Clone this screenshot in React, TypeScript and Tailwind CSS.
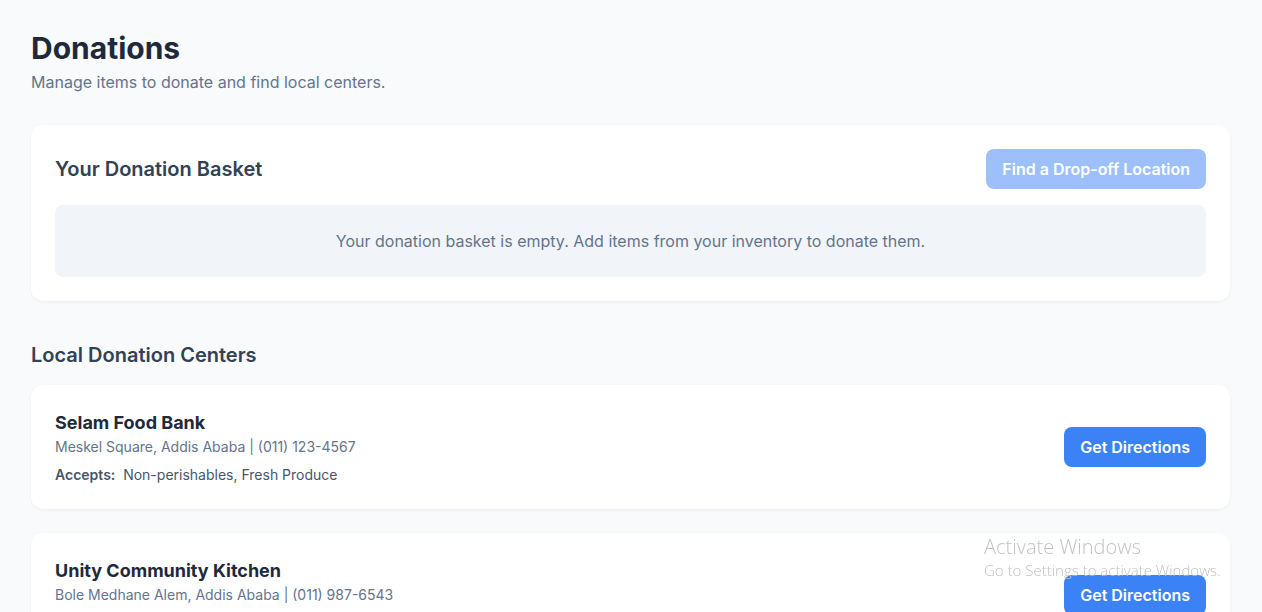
import React from 'react';

interface DonationCenter {
  id: string;
  name: string;
  address: string;
  phone: string;
  accepts: string[];
}

const centers: DonationCenter[] = [
  {
    id: 'selam',
    name: 'Selam Food Bank',
    address: 'Meskel Square, Addis Ababa',
    phone: '(011) 123-4567',
    accepts: ['Non-perishables', 'Fresh Produce'],
  },
  {
    id: 'unity',
    name: 'Unity Community Kitchen',
    address: 'Bole Medhane Alem, Addis Ababa',
    phone: '(011) 987-6543',
    accepts: ['Prepared Meals', 'Canned Goods'],
  },
  {
    id: 'hope',
    name: 'Hope Shelter Pantry',
    address: 'Piassa, Addis Ababa',
    phone: '(011) 555-0199',
    accepts: ['Dry Goods', 'Baby Food'],
  },
];

function CenterCard({ center }: { center: DonationCenter }) {
  return (
    <div className="bg-white rounded-xl shadow-[0_1px_3px_rgba(15,23,42,0.06)] p-6 flex justify-between items-center">
      <div>
        <h3 className="text-lg font-bold text-[#1e293b] leading-7">{center.name}</h3>
        <p className="text-sm text-[#64748b] leading-5">
          {center.address} | {center.phone}
        </p>
        <p className="text-sm text-[#475569] mt-2 leading-5">
          <span className="font-semibold">Accepts:</span>&nbsp; {center.accepts.join(', ')}
        </p>
      </div>
      <button className="bg-[#3b82f6] hover:bg-[#2563eb] text-white font-semibold px-4 h-10 rounded-lg">
        Get Directions
      </button>
    </div>
  );
}

export default function App() {
  const basket: string[] = [];

  return (
    <div
      className="min-h-screen bg-[#f8fafc] pl-[31px] pr-8 pt-[30px] pb-8 relative"
      style={{ fontFamily: 'Inter, "Noto Sans", sans-serif' }}
    >
      {/* Header */}
      <h1 className="text-[30px] font-bold text-[#1e293b] leading-9">Donations</h1>
      <p className="text-[#64748b] mt-1">Manage items to donate and find local centers.</p>

      {/* Basket */}
      <div className="bg-white rounded-xl shadow-[0_1px_3px_rgba(15,23,42,0.06)] p-6 mt-[31px]">
        <div className="flex justify-between items-center mb-4">
          <h2 className="text-xl font-semibold text-[#334155]">Your Donation Basket</h2>
          <button
            disabled={basket.length === 0}
            className="bg-[#3b82f6] disabled:bg-[#3b82f6]/50 text-white font-semibold px-4 h-10 rounded-lg"
          >
            Find a Drop-off Location
          </button>
        </div>
        <div className="bg-[#f1f5f9] rounded-lg py-6 text-center text-[#64748b]">
          Your donation basket is empty. Add items from your inventory to donate them.
        </div>
      </div>

      {/* Centers */}
      <h2 className="text-xl font-semibold text-[#334155] mt-10 mb-4">Local Donation Centers</h2>
      <div className="flex flex-col gap-6">
        {centers.map((c) => (
          <CenterCard key={c.id} center={c} />
        ))}
      </div>

      {/* OS watermark */}
      <div
        className="fixed left-[984px] top-[533px] pointer-events-none text-[#c2c2c2]"
        style={{ fontFamily: '"Open Sans", "Noto Sans", sans-serif' }}
      >
        <div className="text-[20px] font-light leading-[28px]">Activate Windows</div>
        <div className="text-[15px] font-light leading-[18px]">Go to Settings to activate Windows.</div>
      </div>
    </div>
  );
}
